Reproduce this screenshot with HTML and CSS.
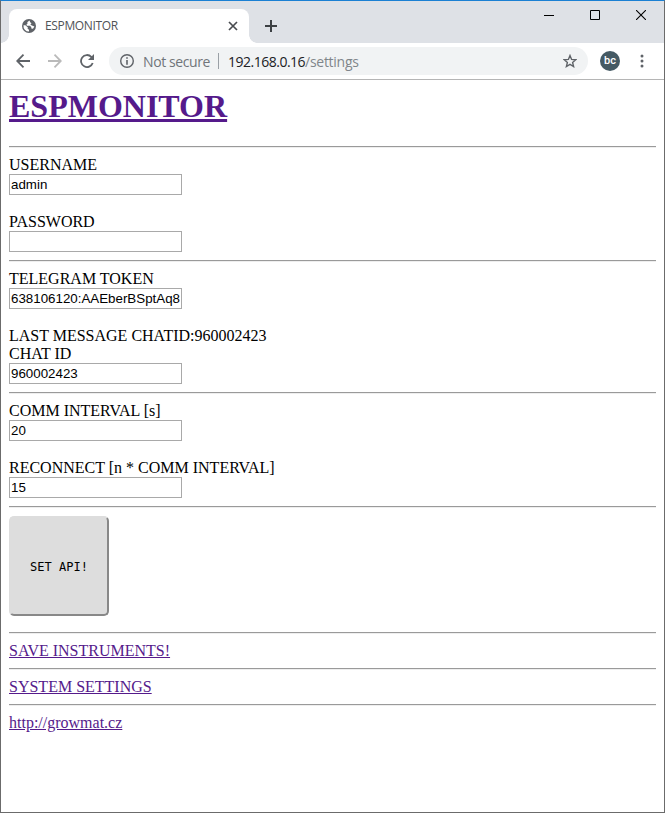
FILE: index.html
```html
<!DOCTYPE html>
<html lang="en">
<head>
<meta charset="utf-8">
<title>ESPMONITOR</title>
<link rel="stylesheet" href="styles.css">
</head>
<body>
<div class="window">
  <header class="tabstrip">
    <div class="tab">
      <svg class="globe" width="14" height="14" viewBox="0 0 14 14"><circle cx="7" cy="7" r="7" fill="#5f6368"/><path d="M7.500 1.500 5.200 3.200 5.700 4.300 4.500 5.500 4.800 6.800H8l1.300 1.500v1.200L11 9.700l1.400-2.300L9.300 6.300 8.400 5.400 9.500 4.300 8.200 3.200Z" fill="#fff"/><path d="M1.500 6.300H3.400L5.900 8.400 5.600 9.700 7 10.700V12.500A5.500 5.500 0 0 1 1.500 6.300Z" fill="#fff"/></svg>
      <span class="tab-title">ESPMONITOR</span>
      <svg class="tab-close" width="10" height="10" viewBox="0 0 10 10"><path d="m1 1 8 8M9 1 1 9" stroke="#494c50" stroke-width="1.700"/></svg>
    </div>
    <svg class="plus" width="12" height="12" viewBox="0 0 12 12"><path d="M6 0v12M0 6h12" stroke="#3c4043" stroke-width="2"/></svg>
    <div class="controls">
      <svg width="10" height="10" viewBox="0 0 10 10"><path d="M0 5.500h10" stroke="#000"/></svg>
      <svg width="10" height="10" viewBox="0 0 10 10"><path d="M.5.500h9v9h-9z" fill="none" stroke="#000"/></svg>
      <svg width="10" height="10" viewBox="0 0 10 10"><path d="m0 0 10 10M10 0 0 10" stroke="#000" stroke-width="1.100"/></svg>
    </div>
  </header>
  <nav class="toolbar">
    <svg class="back" width="14" height="14" viewBox="0 0 14 14"><path d="M14 7H1.500M7.500.700 1.200 7l6.300 6.300" fill="none" stroke="#5f6368" stroke-width="1.800"/></svg>
    <svg class="forward" width="14" height="14" viewBox="0 0 14 14"><path d="M0 7h12.500M6.500.700 12.800 7l-6.300 6.300" fill="none" stroke="#bababa" stroke-width="1.800"/></svg>
    <svg class="reload" width="14" height="14" viewBox="0 0 14 14"><path d="M12.700 9A6 6 0 1 1 11.300 2.800L12 3.500" fill="none" stroke="#5f6368" stroke-width="1.800"/><path d="M14 0v6H8Z" fill="#5f6368"/></svg>
    <div class="address">
      <svg class="info" width="14" height="14" viewBox="0 0 14 14"><circle cx="7" cy="7" r="6.300" fill="none" stroke="#5f6368" stroke-width="1.400"/><path d="M7 3.200v1.600M7 6v4.700" stroke="#5f6368" stroke-width="1.600"/></svg>
      <span class="secure">Not secure</span>
      <span class="divider"></span>
      <span class="host">192.168.0.16</span><span class="path">/settings</span>
      <svg class="star" width="14" height="14" viewBox="0 0 14 14"><path d="m7 1.500 1.600 3.900 4.200.3-3.200 2.700 1 4.100L7 10.300l-3.600 2.200 1-4.100L1.200 5.700l4.200-.3Z" fill="none" stroke="#5f6368" stroke-width="1.400"/></svg>
    </div>
    <span class="avatar">bc</span>
    <svg class="menu" width="4" height="14" viewBox="0 0 4 14" fill="#5f6368"><circle cx="2" cy="2" r="1.500"/><circle cx="2" cy="7" r="1.500"/><circle cx="2" cy="12" r="1.500"/></svg>
  </nav>
  <main>
    <h1><a class="link">ESPMONITOR</a></h1>
    <hr>
    <label for="user">USERNAME</label>
    <input id="user" value="admin">
    <label class="gap" for="pass">PASSWORD</label>
    <input id="pass">
    <hr>
    <label for="token">TELEGRAM TOKEN</label>
    <input id="token" value="638106120:AAEberBSptAq8">
    <p class="gap">LAST MESSAGE CHATID:960002423</p>
    <label for="chat">CHAT ID</label>
    <input id="chat" value="960002423">
    <hr>
    <label for="interval">COMM INTERVAL [s]</label>
    <input id="interval" value="20">
    <label class="gap" for="reconnect">RECONNECT [n * COMM INTERVAL]</label>
    <input id="reconnect" value="15">
    <hr>
    <button>SET API!</button>
    <hr>
    <p><a class="link">SAVE INSTRUMENTS!</a></p>
    <hr>
    <p><a class="link">SYSTEM SETTINGS</a></p>
    <hr>
    <p><a class="link">http://growmat.cz</a></p>
  </main>
</div>
</body>
</html>
```
FILE: styles.css
```css
* { box-sizing: border-box; }
body { margin: 0; }
svg { display: block; flex: none; }
.window {
  height: 813px;
  border: 1px solid #6b6b6b;
  border-top-color: #1b80d3;
  background: #fff;
  overflow: hidden;
}
.tabstrip {
  display: flex;
  height: 42px;
  padding: 8px 18px 0 8px;
  background: #dee1e6;
}
.tab {
  position: relative;
  display: flex;
  align-items: center;
  width: 240px;
  height: 34px;
  padding: 0 11px 0 13px;
  border-radius: 8px 8px 0 0;
  background: #fff;
}
.tab::before, .tab::after {
  content: "";
  position: absolute;
  bottom: 0;
  width: 8px;
  height: 8px;
}
.tab::before { left: -8px; background: radial-gradient(circle at 0 0, #dee1e6 7.500px, #fff 8px); }
.tab::after { right: -8px; background: radial-gradient(circle at 100% 0, #dee1e6 7.500px, #fff 8px); }
.tab-title {
  margin: -1px auto 0 9px;
  font: 12px "Open Sans", sans-serif;
  letter-spacing: -0.350px;
  color: #505357;
}
.plus { margin: 11px 0 0 16px; }
.controls { display: flex; gap: 36px; margin: 1px 0 0 auto; }
.toolbar {
  display: flex;
  align-items: center;
  height: 37px;
  padding: 0 20px 0 15px;
  border-bottom: 1px solid #b5b5b5;
}
.forward, .reload { margin-left: 18px; }
.address {
  display: flex;
  align-items: center;
  width: 479px;
  height: 28px;
  margin-left: 15px;
  padding: 0 11px;
  border-radius: 14px;
  background: #f1f3f4;
  font: 14px "Open Sans", sans-serif;
}
.secure { width: 67px; margin-left: 9px; color: #70757a; letter-spacing: -0.400px; white-space: nowrap; }
.divider { width: 1px; height: 16px; margin: 0 9px 0 8px; background: #9aa0a6; }
.host { color: #202124; letter-spacing: -0.500px; }
.path { color: #80868b; letter-spacing: -0.280px; }
.star { margin-left: auto; }
.avatar {
  width: 20px;
  height: 20px;
  margin-left: 12px;
  border-radius: 50%;
  background: #455a64;
  color: #fff;
  font: 500 11px/20px Roboto, sans-serif;
  text-align: center;
}
.menu { margin-left: auto; }
main {
  padding: 0 8px;
  font: 16px/18px "Liberation Serif", serif;
  color: #000;
}
h1 { margin: 0 0 21px; padding-top: 8px; font-size: 32px; line-height: 37px; }
.link { color: #551a8b; text-decoration: underline; }
h1 .link { text-decoration-thickness: 3px; text-underline-offset: 2px; }
hr { height: 2px; margin: 8px 0; border: 0; border-top: 1px solid #9a9a9a; background: #eee; }
p { margin: 0; height: 18px; }
label { display: block; height: 18px; }
.gap { margin-top: 18px; }
input {
  display: block;
  width: 173px;
  height: 21px;
  padding: 1px;
  border: 1px solid #a9a9a9;
  background: #fff;
  color: #000;
  font: 13.330px "Liberation Sans", sans-serif;
}
button {
  display: block;
  width: 100px;
  height: 100px;
  margin-bottom: 16px;
  padding: 2px 0 0;
  border: 2px solid #ddd;
  border-right-color: #888;
  border-bottom-color: #888;
  border-radius: 5px;
  background: #ddd;
  color: #000;
  font: 12px "DejaVu Sans Mono", monospace;
}
```
